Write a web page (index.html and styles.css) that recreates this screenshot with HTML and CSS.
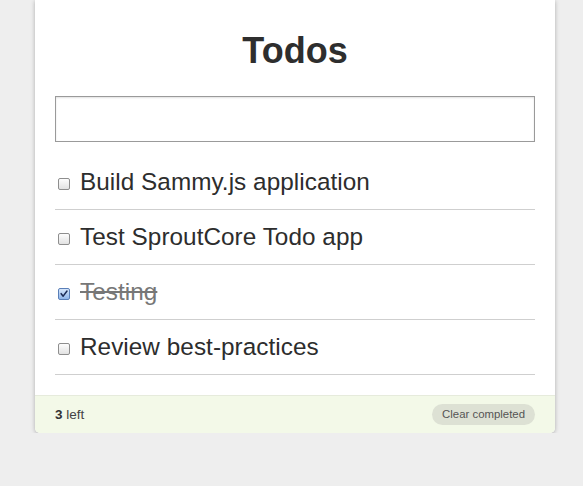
FILE: index.html
```html
<!DOCTYPE html>
<html>
<head>
<meta charset="utf-8">
<title>Todos</title>
<link rel="stylesheet" href="styles.css">
</head>
<body>
<div class="card">
  <div class="main">
    <h1 class="title">Todos</h1>
    <div class="new-todo"></div>
    <ul class="list">
      <li class="item"><span class="check"></span><span class="label">Build Sammy.js application</span></li>
      <li class="item"><span class="check"></span><span class="label">Test SproutCore Todo app</span></li>
      <li class="item done"><span class="check checked"><svg viewBox="0 0 12 12" width="12" height="12"><path d="M2.6 5.6 L5 8.6 L9.6 2.4" fill="none" stroke="#1b2a55" stroke-width="1.8" stroke-linecap="round" stroke-linejoin="round"/></svg></span><span class="label">Testing</span></li>
      <li class="item"><span class="check"></span><span class="label">Review best-practices</span></li>
    </ul>
  </div>
  <div class="footer">
    <span class="count"><b>3</b> left</span>
    <span class="clear">Clear completed</span>
  </div>
</div>
</body>
</html>
```
FILE: styles.css
```css
html, body {
  margin: 0;
  padding: 0;
  background: #eeeeee;
  font-family: "Liberation Sans", Arial, Helvetica, sans-serif;
  color: #333;
}
.card {
  width: 520px;
  margin: 0 0 0 35px;
  background: #fff;
  border-radius: 0 0 5px 5px;
  box-shadow: 0 1px 4px rgba(0,0,0,0.28);
}
.main {
  padding: 31px 20px 20px;
}
.title {
  margin: 0;
  font-size: 36px;
  line-height: 40px;
  font-weight: bold;
  text-align: center;
  color: #2e2e2e;
}
.new-todo {
  margin-top: 25px;
  height: 44px;
  border: 1px solid #9a9a9a;
  box-shadow: inset 0 1px 2px rgba(0,0,0,0.12);
  background: #fff;
}
.list {
  list-style: none;
  margin: 13px 0 0;
  padding: 0;
}
.item {
  display: flex;
  align-items: center;
  height: 54px;
  border-bottom: 1px solid #cfcfcf;
}
.check {
  box-sizing: border-box;
  width: 12px;
  height: 12px;
  margin: 4px 10px 0 3px;
  border: 1px solid #8e8e8e;
  border-radius: 2px;
  background: linear-gradient(#fdfdfd, #e2e2e2);
  display: flex;
  align-items: center;
  justify-content: center;
  flex: none;
}
.check.checked {
  border-color: #5a7fb8;
  background: linear-gradient(#d6e6fb, #8fb5ea);
}
.check svg {
  display: block;
}
.label {
  font-size: 24.3px;
  letter-spacing: 0.05px;
  line-height: 54px;
  color: #2d2d2d;
}
.done .label {
  color: #777;
  text-decoration: line-through;
}
.footer {
  display: flex;
  align-items: center;
  justify-content: space-between;
  height: 37px;
  padding: 0 20px;
  background: #f3f9e8;
  border-top: 1px solid #e6ebdc;
  border-radius: 0 0 5px 5px;
  font-size: 13.5px;
  color: #444;
}
.count b {
  font-weight: bold;
  color: #333;
}
.clear {
  height: 21px;
  line-height: 21px;
  padding: 0 10px;
  border-radius: 11px;
  background: #dde1d4;
  font-size: 11.4px;
  color: #555;
}
```
